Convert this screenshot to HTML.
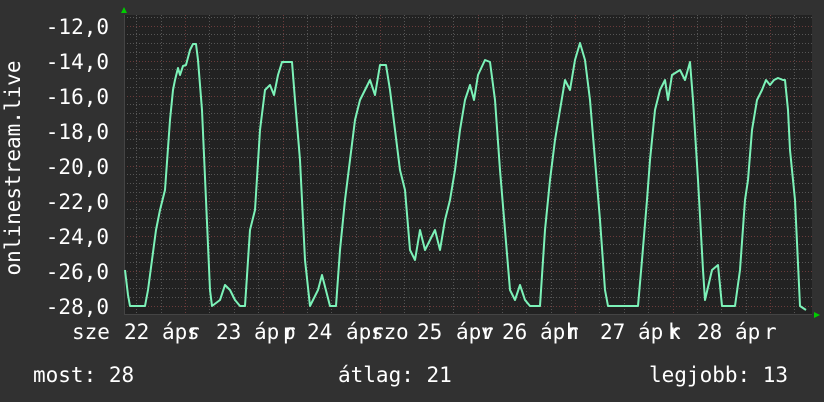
<!DOCTYPE html>
<html><head><style>
body{margin:0;width:824px;height:402px;background:#313131;overflow:hidden}
svg{display:block}
text{font-family:"DejaVu Sans Mono","Liberation Mono",monospace;fill:#fff}
</style></head><body>
<svg width="824" height="402" viewBox="0 0 824 402">
<rect x="0" y="0" width="824" height="402" fill="#313131"/>
<rect x="124" y="15" width="688" height="300" fill="#222222"/>
<g stroke="#555" stroke-width="1" stroke-dasharray="1,2">
<path d="M124 34.5H812M124 43.5H812M124 52.5H812M124 69.5H812M124 78.5H812M124 87.5H812M124 104.5H812M124 113.5H812M124 122.5H812M124 139.5H812M124 148.5H812M124 157.5H812M124 174.5H812M124 183.5H812M124 192.5H812M124 209.5H812M124 218.5H812M124 227.5H812M124 244.5H812M124 253.5H812M124 262.5H812M124 279.5H812M124 288.5H812M124 297.5H812M124 17.5H812"/>
<path d="M136.5 15V315M161.5 15V315M209.5 15V315M234.5 15V315M258.5 15V315M307.5 15V315M331.5 15V315M356.5 15V315M404.5 15V315M429.5 15V315M453.5 15V315M502.5 15V315M526.5 15V315M551.5 15V315M599.5 15V315M624.5 15V315M648.5 15V315M697.5 15V315M721.5 15V315M746.5 15V315M794.5 15V315"/>
</g>
<g stroke="#6a3a3a" stroke-width="1" stroke-dasharray="1,2">
<path d="M124 26.5H812M124 61.5H812M124 96.5H812M124 131.5H812M124 166.5H812M124 201.5H812M124 236.5H812M124 271.5H812M124 306.5H812"/>
<path d="M185.5 15V315M283.5 15V315M380.5 15V315M478.5 15V315M575.5 15V315M673.5 15V315M770.5 15V315"/>
</g>
<path d="M124 314.5H812" stroke="#444" stroke-width="1"/>
<path d="M124.5 15V315" stroke="#444" stroke-width="1"/>
<polygon points="121,13 127,13 124,7" fill="#00cc00"/>
<polygon points="814,312 814,318 820,315" fill="#00cc00"/>
<polyline fill="none" stroke="#7cf2b8" stroke-width="2" stroke-linejoin="round" points="125,270 128,295 130,306 145,306 148,290 152,260 156,230 160,210 165,190 170,120 173,90 175,80 178,68 180,75 183,66 186,65 190,50 193,44 196,44 198,60 202,110 206,200 210,290 212,306 220,300 225,285 230,290 235,300 240,306 245,306 250,230 255,210 260,130 265,90 270,85 274,95 278,75 282,62 292,62 295,100 300,160 305,260 310,306 318,290 322,275 330,306 336,306 340,250 345,200 350,160 355,120 360,100 365,90 370,80 375,95 380,65 386,65 390,90 395,130 400,170 405,190 410,250 415,260 420,230 425,250 430,240 435,230 440,250 445,220 450,200 455,170 460,130 465,100 470,85 474,100 478,75 485,60 490,62 495,100 500,170 505,230 510,290 515,300 520,285 525,300 530,306 540,306 545,230 550,180 555,140 560,110 565,80 570,90 575,60 580,43 585,60 590,100 595,160 600,220 605,290 608,306 620,306 630,306 638,306 642,260 647,200 650,160 655,110 660,90 665,80 668,100 672,75 680,70 685,80 690,62 693,100 698,180 703,270 705,300 712,270 718,265 722,306 735,306 740,270 745,200 748,180 752,130 757,100 762,90 766,80 770,85 774,80 778,78 783,80 785,80 788,110 790,150 795,200 800,306 806,310"/>
<g font-size="21" text-anchor="end">
<text x="109" y="34">-12,0</text>
<text x="109" y="69">-14,0</text>
<text x="109" y="104">-16,0</text>
<text x="109" y="139">-18,0</text>
<text x="109" y="174">-20,0</text>
<text x="109" y="209">-22,0</text>
<text x="109" y="244">-24,0</text>
<text x="109" y="279">-26,0</text>
<text x="109" y="314">-28,0</text>
</g>
<text font-size="21" transform="translate(20,168) rotate(-90)" text-anchor="middle">onlinestream.live</text>
<g font-size="21">
<text x="72" y="339">sze</text>
<text x="124" y="339">22</text><text x="162" y="339">áp</text><text x="187" y="339">r</text><text x="187" y="339">s</text>
<text x="216" y="339">23</text><text x="254" y="339">áp</text><text x="283" y="339">r</text><text x="283" y="339">p</text>
<text x="307" y="339">24</text><text x="346" y="339">áp</text><text x="371" y="339">r</text><text x="371" y="339">sz</text><text x="396" y="339">o</text>
<text x="417" y="339">25</text><text x="456" y="339">áp</text><text x="481" y="339">r</text><text x="481" y="339">v</text>
<text x="502" y="339">26</text><text x="540" y="339">áp</text><text x="566" y="339">r</text><text x="566" y="339">h</text>
<text x="600" y="339">27</text><text x="638" y="339">áp</text><text x="668" y="339">r</text><text x="668" y="339">k</text>
<text x="697" y="339">28</text><text x="735" y="339">áp</text><text x="764" y="339">r</text>
<text x="33" y="382">most: 28</text>
<text x="338" y="382">átlag: 21</text>
<text x="649" y="382">legjobb: 13</text>
</g>
</svg>
</body></html>
